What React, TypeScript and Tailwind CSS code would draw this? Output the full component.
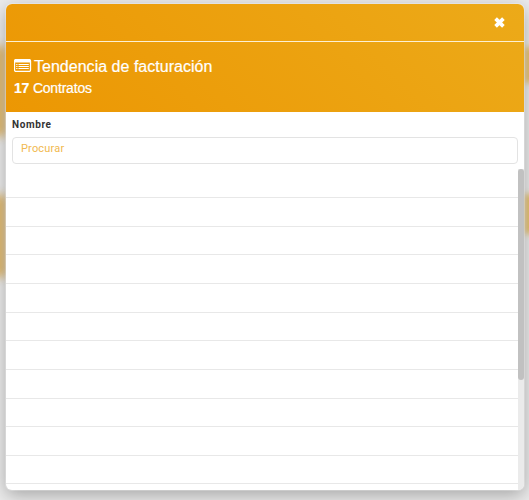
const rows = ['h-[29px]', 'h-[29px]', 'h-[28px]', 'h-[29px]', 'h-[29px]', 'h-[28px]', 'h-[29px]', 'h-[29px]', 'h-[28px]', 'h-[29px]', 'h-[28px]'];

function ListIcon() {
  return (
    <svg className="mb-[3px] h-[13px] w-[18px] shrink-0" viewBox="0 0 18 13" fill="none">
      <rect x="0.5" y="0.5" width="16" height="12" rx="1.5" stroke="white" strokeWidth="1.3" />
      <path d="M1 0.5h15v3H1z" fill="white" />
      <path d="M2.2 5.5h1.3M4.5 5.5h10.3M2.2 7.5h1.3M4.5 7.5h10.3M2.2 9.5h1.3M4.5 9.5h10.3" stroke="white" strokeWidth="1.1" />
    </svg>
  );
}

function CloseIcon() {
  return (
    <svg className="h-[11px] w-[11px]" viewBox="0 0 11 11" stroke="white" strokeWidth="3.7" strokeLinecap="square">
      <path d="M2.9 2.9l5.2 5.2M8.1 2.9L2.9 8.1" />
    </svg>
  );
}

export default function App() {
  return (
    <div className="relative h-[500px] w-[529px] overflow-hidden bg-[#ebebeb] px-[6px] pt-[4px] font-['Liberation_Sans',Arial,sans-serif]">
      <div className="absolute top-[46px] -left-[8px] h-[90px] w-[14px] bg-[#dfb566] blur-[5px]" />
      <div className="absolute top-[195px] -left-[8px] h-[82px] w-[14px] bg-[#dfb566] blur-[5px]" />
      <div className="absolute top-[47px] left-[525px] h-[36px] w-[12px] bg-[#e6bd63] blur-[3px]" />
      <div className="absolute top-[194px] left-[525px] h-[40px] w-[12px] bg-[#e6bd63] blur-[3px]" />
      <section className="relative flex h-[486px] w-[518px] flex-col rounded-[6px] bg-white shadow-[0_0_0_1px_rgba(255,255,255,0.25),0_5px_18px_rgba(0,0,0,0.3)]">
        <header className="h-[108px] shrink-0 rounded-t-[6px] bg-[linear-gradient(45deg,#ec9703,#ecaa19)] text-white">
          <div className="flex h-[38px] justify-end border-b border-[#fdf0d2] pt-[13px] pr-[19px]">
            <button aria-label="Cerrar" className="h-[11px] w-[11px]"><CloseIcon /></button>
          </div>
          <div className="pt-[15px] pl-[8px]">
            <h1 className="flex h-[20px] items-center gap-[2px] text-[16px] leading-[20px] whitespace-nowrap [-webkit-text-stroke:0.2px_white]">
              <ListIcon />
              <span className="tracking-[0.02px]">Tendencia de facturación</span>
            </h1>
            <p className="mt-px text-[14px] leading-[20px] tracking-[-0.2px] [-webkit-text-stroke:0.2px_white]"><b>17</b> Contratos</p>
          </div>
        </header>
        <div className="h-[57px] shrink-0 px-[6px] pt-[6px] font-['Roboto',sans-serif]">
          <label className="block h-[14px] text-[10px] leading-[14px] font-bold tracking-[0.6px] text-[#333]">Nombre</label>
          <input
            placeholder="Procurar"
            className="mt-[5px] block h-[27px] w-[506px] rounded-[4px] border border-[#e3e3e3] bg-white px-[8px] pb-[4px] text-[11px] tracking-[0.18px] outline-none placeholder:text-[#f1b950]"
          />
        </div>
        <div className="flex min-h-0 flex-1 overflow-hidden rounded-b-[6px]">
          <div className="w-[512px] overflow-hidden">
            {rows.map((height, index) => (
              <div key={index} className={`${height} border-b border-[#e8e8e8]`} />
            ))}
          </div>
          <div className="w-[6px] bg-[#ebebeb]">
            <div className="h-[211px] rounded-[3px] bg-[#c1c1c1]" />
          </div>
        </div>
      </section>
    </div>
  );
}
